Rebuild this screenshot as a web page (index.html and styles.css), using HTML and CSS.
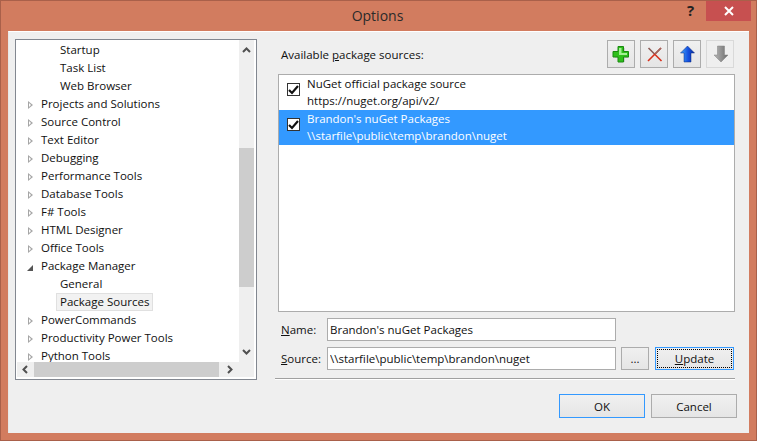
FILE: index.html
```html
<!DOCTYPE html>
<html lang="en">
<head>
<meta charset="utf-8">
<title>Options</title>
<link rel="stylesheet" href="styles.css">
</head>
<body>
<div class="window">
  <header class="titlebar">
    <span class="title">Options</span>
    <span class="help">?</span>
    <span class="close"><svg width="10" height="10" viewBox="0 0 10 10"><path d="M1 1L9 9M9 1L1 9" stroke="#fff" stroke-width="2"/></svg></span>
  </header>
  <main class="client">
    <div class="columns">
      <section class="tree">
        <div class="tree-top">
          <ul class="rows">
            <li class="row lvl2">Startup</li>
            <li class="row lvl2">Task List</li>
            <li class="row lvl2">Web Browser</li>
            <li class="row"><i class="tri"></i>Projects and Solutions</li>
            <li class="row"><i class="tri"></i>Source Control</li>
            <li class="row"><i class="tri"></i>Text Editor</li>
            <li class="row"><i class="tri"></i>Debugging</li>
            <li class="row"><i class="tri"></i>Performance Tools</li>
            <li class="row"><i class="tri"></i>Database Tools</li>
            <li class="row"><i class="tri"></i>F# Tools</li>
            <li class="row"><i class="tri"></i>HTML Designer</li>
            <li class="row"><i class="tri"></i>Office Tools</li>
            <li class="row"><i class="tri open"></i>Package Manager</li>
            <li class="row lvl2">General</li>
            <li class="row lvl2"><span class="sel">Package Sources</span></li>
            <li class="row"><i class="tri"></i>PowerCommands</li>
            <li class="row"><i class="tri"></i>Productivity Power Tools</li>
            <li class="row"><i class="tri"></i>Python Tools</li>
          </ul>
          <div class="vbar">
            <svg class="arrow-up" width="9" height="6" viewBox="0 0 9 6"><path d="M1 5L4.500 1.500L8 5" fill="none" stroke="#505050" stroke-width="2"/></svg>
            <div class="vtrack"><div class="vthumb"></div></div>
            <svg class="arrow-down" width="9" height="6" viewBox="0 0 9 6"><path d="M1 1L4.500 4.500L8 1" fill="none" stroke="#505050" stroke-width="2"/></svg>
          </div>
        </div>
        <div class="hbar">
          <svg width="6" height="9" viewBox="0 0 6 9"><path d="M5 1L1.500 4.500L5 8" fill="none" stroke="#505050" stroke-width="2"/></svg>
          <div class="hthumb"></div>
          <svg width="6" height="9" viewBox="0 0 6 9"><path d="M1 1L4.500 4.500L1 8" fill="none" stroke="#505050" stroke-width="2"/></svg>
        </div>
      </section>
      <section class="panel">
        <div class="head">
          <span class="head-label">Available <u>p</u>ackage sources:</span>
          <div class="tools">
            <button class="tool" type="button"><svg width="20" height="20" viewBox="0 0 20 20"><path d="M8 4h6v4h4v6h-4v4H8v-4H4V8h4z" fill="#b8b8b8" opacity=".6"/><path d="M7 2.500h5.500v5h5V13h-5v5H7v-5H2V7.500h5z" fill="#2fbf1c" stroke="#1a8a10"/><path d="M8 4h2.500v5H16v2H8z" fill="#a4f094"/></svg></button>
            <button class="tool" type="button"><svg width="20" height="20" viewBox="0 0 20 20"><path d="M4.500 4L11 10.500" stroke="#8a5a55" stroke-width="1.600"/><path d="M11 10.500L17.500 17" stroke="#d8301c" stroke-width="1.600"/><path d="M17 4L4 17" stroke="#d8301c" stroke-width="1.600"/><path d="M17 4L11 10" stroke="#9a6a64" stroke-width="1.600"/></svg></button>
            <button class="tool" type="button"><svg width="20" height="20" viewBox="0 0 20 20"><defs><linearGradient id="b" x1="0" x2="1"><stop offset="0" stop-color="#45a8f8"/><stop offset=".55" stop-color="#1450e0"/><stop offset="1" stop-color="#0a2c98"/></linearGradient></defs><path d="M10.500 2l7 7h-3.500v9H7V9H3.500z" fill="url(#b)" stroke="#0a2a80" stroke-width=".5"/></svg></button>
            <button class="tool off" type="button"><svg width="20" height="20" viewBox="0 0 20 20"><defs><linearGradient id="g" x1="0" x2="1"><stop offset="0" stop-color="#b8b8b8"/><stop offset="1" stop-color="#6c6c6c"/></linearGradient></defs><path d="M7.500 2h7v9H18l-7 7-7-7h3.500z" fill="url(#g)" stroke="#808080" stroke-width=".5"/></svg></button>
          </div>
        </div>
        <div class="sources">
          <div class="source">
            <span class="check"><svg width="11" height="11" viewBox="0 0 11 11"><path d="M1 6l3 3 6-7" fill="none" stroke="#111" stroke-width="2.200"/></svg></span>
            <div class="source-text"><div>NuGet official package source</div><div>https://nuget.org/api/v2/</div></div>
          </div>
          <div class="source active">
            <span class="check"><svg width="11" height="11" viewBox="0 0 11 11"><path d="M1 6l3 3 6-7" fill="none" stroke="#111" stroke-width="2.200"/></svg></span>
            <div class="source-text"><div>Brandon's nuGet Packages</div><div>\\starfile\public\temp\brandon\nuget</div></div>
          </div>
        </div>
        <div class="fields">
          <label class="f-label"><u>N</u>ame:</label>
          <input class="f-input" value="Brandon's nuGet Packages">
          <span></span><span></span>
          <label class="f-label"><u>S</u>ource:</label>
          <input class="f-input" value="\\starfile\public\temp\brandon\nuget">
          <button class="btn dots" type="button">...</button>
          <button class="btn update" type="button"><span class="focus"><u>U</u>pdate</span></button>
        </div>
        <div class="rule"></div>
      </section>
    </div>
    <div class="footer">
      <button class="btn big primary" type="button">OK</button>
      <button class="btn big" type="button">Cancel</button>
    </div>
  </main>
</div>
</body>
</html>
```
FILE: styles.css
```css
* { box-sizing: border-box; }
html, body { margin: 0; height: 100%; }
body { font: 11.5px/15px "Open Sans", sans-serif; color: #101010; overflow: hidden; }
ul { list-style: none; margin: 0; padding: 0; }
.window { width: 757px; height: 441px; background: #d27c5f; border: 1px solid #a9604a; display: flex; flex-direction: column; padding: 0 7px 7px; }
.titlebar { height: 30px; flex: none; position: relative; display: flex; justify-content: center; align-items: center; padding: 0 2px 2px 0; }
.title { font-size: 14px; color: #2a2a2a; }
.help { position: absolute; left: 679px; top: 1px; font: bold 15px/16px "Open Sans", sans-serif; color: #222; }
.close { position: absolute; right: -2px; top: 0; width: 45px; height: 20px; background: #c75050; display: flex; align-items: center; justify-content: center; }
.client { flex: 1; background: #efefef; border-top: 1px solid #fff; border-left: 1px solid #e8e8e8; display: flex; flex-direction: column; padding: 7px 12px 0 6px; min-height: 0; }
.columns { display: flex; gap: 21px; height: 341px; flex: none; }
.tree { width: 242px; height: 341px; border: 1px solid #828790; background: #fff; padding: 0 2px 2px 1px; display: flex; flex-direction: column; flex: none; }
.tree-top { flex: 1; min-height: 0; display: flex; }
.rows { flex: 1; overflow: hidden; padding-top: 1px; }
.row { height: 18px; line-height: 18px; padding-left: 24px; position: relative; white-space: nowrap; }
.lvl2 { padding-left: 43px; }
.sel { display: inline-block; background: #f2f2f2; border: 1px solid #e0e0e0; margin-left: -4px; padding: 0 3px; height: 18px; line-height: 16px; }
.tri { position: absolute; left: 11px; top: 6px; width: 0; height: 0; border-style: solid; border-width: 4px 0 4px 5px; border-color: transparent transparent transparent #a6a6a6; }
.tri::after { content: ""; position: absolute; left: -4.200px; top: -2.300px; border-style: solid; border-width: 2.300px 0 2.300px 2.800px; border-color: transparent transparent transparent #fff; }
.tri.open { left: 10px; top: 8px; border-width: 0 0 6px 6px; border-color: transparent transparent #555 transparent; }
.tri.open::after { display: none; }
.vbar { width: 15px; background: #efefef; display: flex; flex-direction: column; align-items: center; flex: none; }
.arrow-up { flex: none; margin: 7px 0 3px; }
.arrow-down { flex: none; margin: 3px 0 7px; }
.vtrack { flex: 1; width: 15px; padding-top: 92px; }
.vthumb { height: 139px; background: #cdcdcd; }
.hbar { height: 15px; background: #efefef; display: flex; align-items: center; flex: none; padding-left: 5px; }
.hthumb { width: 185px; height: 15px; background: #cdcdcd; margin: 0 8px 0 6px; }
.panel { flex: 1; min-width: 0; display: flex; flex-direction: column; padding-right: 2px; }
.head { display: flex; align-items: center; justify-content: space-between; height: 28px; padding: 0 1px 0 3px; margin-top: 1px; flex: none; }
.tools { display: flex; gap: 5px; }
.tool { width: 28px; height: 28px; padding: 0; border: 1px solid #acacac; background: linear-gradient(#f0f0f0, #e5e5e5); display: flex; align-items: center; justify-content: center; }
.tool.off { border-color: #d9d9d9; background: #efefef; }
.sources { height: 238px; margin-top: 6px; background: #fff; border: 1px solid #acacac; flex: none; }
.source { height: 35px; display: flex; gap: 7px; align-items: flex-start; padding-left: 8px; line-height: 17px; }
.source.active { background: #3399ff; color: #fff; }
.check { width: 13px; height: 13px; margin-top: 8px; border: 1px solid #333; background: #fff; display: flex; align-items: center; justify-content: center; flex: none; }
.fields { display: grid; grid-template-columns: 46px 289px 33px 85px; grid-template-rows: 23px 23px; row-gap: 6px; margin-top: 6px; margin-left: 3px; align-items: center; flex: none; }
.f-label { white-space: nowrap; }
.f-input { height: 23px; width: 289px; border: 1px solid #acacac; background: #fff; font: inherit; color: inherit; padding: 0 2px 1px 2px; outline: 0; }
.btn { font: inherit; color: inherit; background: linear-gradient(#f0f0f0, #e5e5e5); border: 1px solid #acacac; padding: 0; }
.dots { height: 23px; width: 28px; margin-left: 5px; }
.update { height: 23px; width: 79px; margin-left: 6px; border-color: #3399ff; padding: 1px; }
.focus { display: block; height: 100%; border: 1px dotted #000; line-height: 18px; }
.rule { height: 2px; margin: 8px 0 0 -3px; border-top: 1px solid #a0a0a0; background: #fff; flex: none; }
.footer { display: flex; justify-content: flex-end; gap: 6px; padding-top: 14px; }
.big { width: 86px; height: 24px; }
.primary { border-color: #3399ff; }
```
